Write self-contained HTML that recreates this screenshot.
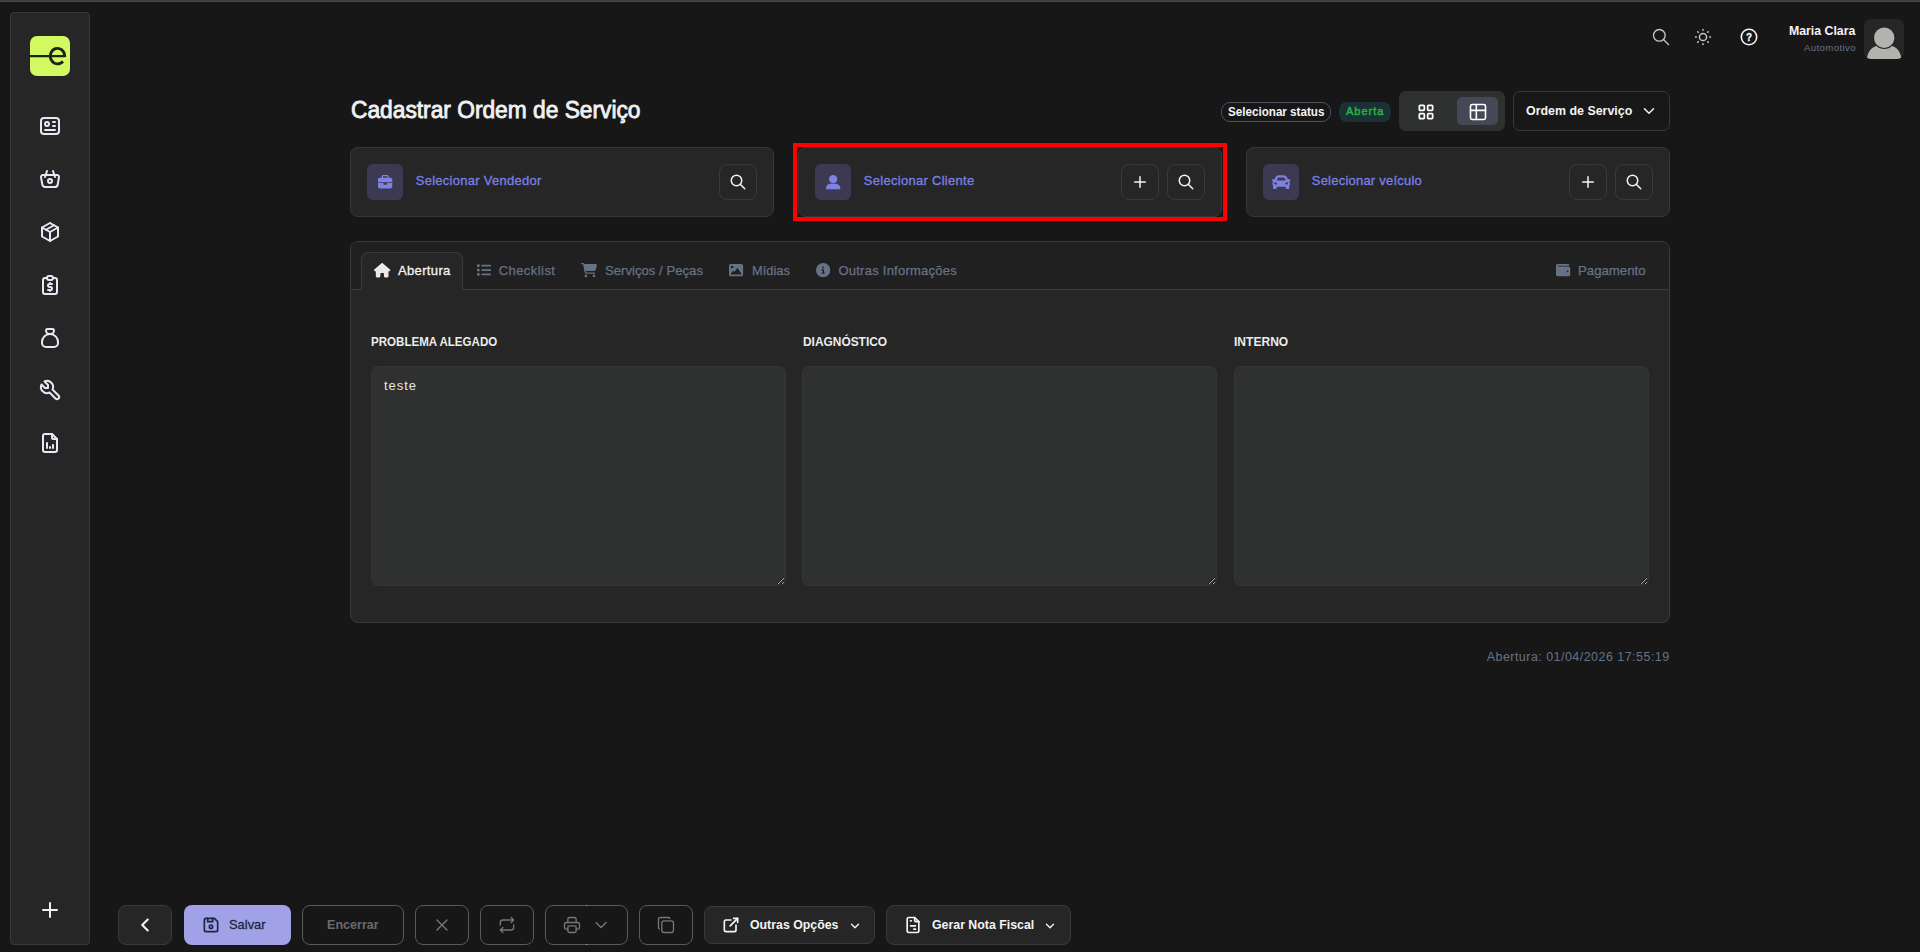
<!DOCTYPE html>
<html lang="pt-BR"><head><meta charset="utf-8"><title>Cadastrar Ordem de Serviço</title>
<style>
*{box-sizing:border-box;margin:0;padding:0}
html,body{width:1920px;height:952px;overflow:hidden;background:#171717;font-family:"Liberation Sans",sans-serif}
.a{position:absolute}
.t{position:absolute;white-space:nowrap;line-height:1;transform-origin:0 50%}
svg{position:absolute;overflow:visible}
.st{fill:none;stroke-linecap:round;stroke-linejoin:round}
.side{left:10px;top:12px;width:80px;height:933px;background:#262626;border:1px solid #383838;border-radius:4px}
.logo{left:30px;top:36px;width:40px;height:40px;border-radius:7px;background:#d2f962}
.card{top:147px;width:424px;height:70px;background:#262626;border:1px solid #373737;border-radius:8px}
.ibox{top:164px;width:36px;height:36px;border-radius:6px;background:#3b3a52}
.sbtn{top:164px;width:38px;height:36px;border-radius:8px;border:1px solid #3a3b3b;background:#262626}
.panel{left:350px;top:241px;width:1320px;height:382px;background:#262626;border:1px solid #3b3b3b;border-radius:8px;overflow:hidden}
.phead{left:0;top:0;width:1318px;height:48px;background:#202020;border-bottom:1px solid #3b3b3b}
.tabact{left:361px;top:252px;width:102px;height:38px;background:#262626;border:1px solid #3b3b3b;border-bottom:none;border-radius:8px 8px 0 0}
textarea{position:absolute;top:366px;width:415px;height:220px;background:#2f3131;border:1px solid #343636;border-radius:7px;resize:both;outline:none;color:transparent;font-family:"Liberation Sans",sans-serif}
.btn{top:905px;height:40px;border-radius:8px}
.ob{border:1px solid #5a5a5a;background:#171717}
.fb{border:1px solid #3a3a3a;background:#262626}

</style></head>
<body>
<div class="a" style="left:0;top:0;width:1920px;height:1px;background:#3b3b3b"></div>
<div class="a" style="left:0;top:1px;width:1920px;height:1px;background:#464847"></div>

<!-- sidebar -->
<div class="a side"></div>
<div class="a logo"></div>
<svg style="left:30px;top:36px" width="40" height="40" viewBox="0 0 40 40"><path fill="none" stroke="#1b2413" stroke-width="2.200" d="M0 20.050H35"/><path fill="none" stroke="#1b2413" stroke-width="2.800" d="M34.700 21.100V20.100A7.200 7.800 0 1 0 32.900 25.300"/></svg>

<svg class="st" style="left:38px;top:114px" width="24" height="24" viewBox="0 0 24 24" stroke="#e6e8f5" stroke-width="2"><path d="M3 7a3 3 0 0 1 3 -3h12a3 3 0 0 1 3 3v10a3 3 0 0 1 -3 3h-12a3 3 0 0 1 -3 -3z"/><path d="M7 10a2 2 0 1 0 4 0a2 2 0 1 0 -4 0"/><path d="M15 8h2"/><path d="M15 12h2"/><path d="M7 16h10"/></svg>
<svg class="st" style="left:38px;top:167px" width="24" height="24" viewBox="0 0 24 24" stroke="#e6e8f5" stroke-width="2"><path d="M10 14a2 2 0 1 0 4 0a2 2 0 0 0 -4 0"/><path d="M5.001 8h13.999a2 2 0 0 1 1.977 2.304l-1.255 7.152a3 3 0 0 1 -2.966 2.544h-9.512a3 3 0 0 1 -2.965 -2.544l-1.255 -7.152a2 2 0 0 1 1.977 -2.304z"/><path d="M17 10l-2 -6"/><path d="M7 10l2 -6"/></svg>
<svg class="st" style="left:38px;top:220px" width="24" height="24" viewBox="0 0 24 24" stroke="#e6e8f5" stroke-width="2"><path d="M12 3l8 4.500l0 9l-8 4.500l-8 -4.500l0 -9l8 -4.500"/><path d="M12 12l8 -4.500"/><path d="M12 12l0 9"/><path d="M12 12l-8 -4.500"/><path d="M16 5.250l-8 4.500"/></svg>
<svg class="st" style="left:38px;top:273px" width="24" height="24" viewBox="0 0 24 24" stroke="#e6e8f5" stroke-width="2"><path d="M9 5h-2a2 2 0 0 0 -2 2v12a2 2 0 0 0 2 2h10a2 2 0 0 0 2 -2v-12a2 2 0 0 0 -2 -2h-2"/><path d="M9 5a2 2 0 0 1 2 -2h2a2 2 0 0 1 2 2v0a2 2 0 0 1 -2 2h-2a2 2 0 0 1 -2 -2z"/><path d="M14 11h-2.500a1.500 1.500 0 0 0 0 3h1a1.500 1.500 0 0 1 0 3h-2.500"/><path d="M12 17v1m0 -8v1"/></svg>
<svg class="st" style="left:38px;top:326px" width="24" height="24" viewBox="0 0 24 24" stroke="#e6e8f5" stroke-width="2"><path d="M9.500 3h5a1.500 1.500 0 0 1 1.500 1.500a3.500 3.500 0 0 1 -3.500 3.500h-1a3.500 3.500 0 0 1 -3.500 -3.500a1.500 1.500 0 0 1 1.500 -1.500z"/><path d="M4 17v-1a8 8 0 1 1 16 0v1a4 4 0 0 1 -4 4h-8a4 4 0 0 1 -4 -4z"/></svg>
<svg class="st" style="left:38px;top:378px" width="24" height="24" viewBox="0 0 24 24" stroke="#e6e8f5" stroke-width="2"><path d="M7 10h3v-3l-3.500 -3.500a6 6 0 0 1 8 8l6 6a2 2 0 0 1 -3 3l-6 -6a6 6 0 0 1 -8 -8l3.500 3.500"/></svg>
<svg class="st" style="left:38px;top:431px" width="24" height="24" viewBox="0 0 24 24" stroke="#e6e8f5" stroke-width="2"><path d="M14 3v4a1 1 0 0 0 1 1h4"/><path d="M17 21h-10a2 2 0 0 1 -2 -2v-14a2 2 0 0 1 2 -2h7l5 5v11a2 2 0 0 1 -2 2z"/><path d="M9 17v-5"/><path d="M12 17v-1"/><path d="M15 17v-3"/></svg>
<svg class="st" style="left:38px;top:898px" width="24" height="24" viewBox="0 0 24 24" stroke="#eceef8" stroke-width="2"><path d="M12 5v14"/><path d="M5 12h14"/></svg>

<!-- header right -->
<svg class="st" style="left:1651px;top:27px" width="20" height="20" viewBox="0 0 24 24" stroke="#c6c6c6" stroke-width="1.600"><path d="M3 10a7 7 0 1 0 14 0a7 7 0 1 0 -14 0"/><path d="M21 21l-6 -6"/></svg>
<svg class="st" style="left:1692px;top:26px" width="22" height="22" viewBox="0 0 24 24" stroke="#c6c6c6" stroke-width="1.600"><circle cx="12" cy="12" r="3.9"/><path d="M3.800 12h.9"/><path d="M19.300 12h.9"/><path d="M12 3.800v.9"/><path d="M12 19.300v.9"/><path d="M6.200 6.200l.7 .7"/><path d="M17.800 6.200l-.7 .7"/><path d="M17.800 17.800l-.7 -.7"/><path d="M6.200 17.800l.7 -.7"/></svg>
<svg style="left:1740px;top:28px" width="18" height="18" viewBox="0 0 18 18"><circle cx="9" cy="9" r="7.700" fill="none" stroke="#f4f4f4" stroke-width="1.600"/><text transform="translate(9 13.050) scale(.86 1)" x="0" y="0" text-anchor="middle" font-family="Liberation Sans, sans-serif" font-weight="bold" font-size="11.500" fill="#f4f4f4" stroke="#f4f4f4" stroke-width=".35">?</text></svg>
<div class="a" style="left:1864px;top:19px;width:40px;height:40px;border-radius:7px;background:#262626;overflow:hidden">
<svg style="left:0;top:0" width="40" height="40" viewBox="0 0 40 40"><path fill="#b4b2af" d="M3 40C3.500 32 9 27 14.500 26.600C16 28.300 18 29.300 20.200 29.300C22.400 29.300 24.400 28.300 25.900 26.600C31.400 27 36.900 32 37.400 40Z"/><circle cx="20.200" cy="18.800" r="11.300" fill="#262626"/><circle cx="20.200" cy="18.800" r="10.200" fill="#b4b2af"/></svg></div>

<!-- title row -->
<div class="a" style="left:1221px;top:102px;width:110px;height:20px;border:1px solid #4b505c;border-radius:9px"></div>
<div class="a" style="left:1339px;top:102px;width:52px;height:20px;border-radius:8px;background:#1b3136"></div>
<div class="a" style="left:1399px;top:91px;width:106px;height:40px;border-radius:7px;background:#2f3030"></div>
<div class="a" style="left:1457px;top:97px;width:41px;height:28px;border-radius:5px;background:#474857"></div>
<svg class="st" style="left:1416px;top:102px" width="20" height="20" viewBox="0 0 24 24" stroke="#ffffff" stroke-width="2.100"><rect x="4" y="4" width="6" height="6" rx="1"/><rect x="14" y="4" width="6" height="6" rx="1"/><rect x="4" y="14" width="6" height="6" rx="1"/><rect x="14" y="14" width="6" height="6" rx="1"/></svg>
<svg class="st" style="left:1468px;top:102px" width="20" height="20" viewBox="0 0 24 24" stroke="#ffffff" stroke-width="1.900"><path d="M3 5a2 2 0 0 1 2 -2h14a2 2 0 0 1 2 2v14a2 2 0 0 1 -2 2h-14a2 2 0 0 1 -2 -2v-14z"/><path d="M3 10h18"/><path d="M10 3v18"/></svg>
<div class="a" style="left:1513px;top:91px;width:157px;height:40px;border:1px solid #383838;border-radius:7px;background:#181818"></div>
<svg class="st" style="left:1640px;top:102px" width="18" height="18" viewBox="0 0 24 24" stroke="#f4f4f4" stroke-width="2"><path d="M6 9l6 6l6 -6"/></svg>

<!-- cards -->
<div class="a card" style="left:350px"></div>
<div class="a card" style="left:798px"></div>
<div class="a card" style="left:1246px"></div>
<div class="a" style="left:793px;top:143px;width:434px;height:78px;border:4px solid #ff0000"></div>
<div class="a ibox" style="left:367px"></div>
<div class="a ibox" style="left:815px"></div>
<div class="a ibox" style="left:1263px"></div>
<svg style="left:377.800px;top:174.800px" width="14.300" height="14.300" viewBox="0 0 512 512"><path fill="#7f82e2" d="M184 48H328c4.400 0 8 3.600 8 8V96H176V56c0-4.400 3.600-8 8-8zm-56 8V96H64C28.700 96 0 124.700 0 160v96H192 320 512V160c0-35.300-28.700-64-64-64H384V56c0-30.900-25.100-56-56-56H184c-30.900 0-56 25.100-56 56zM512 288H320v32c0 17.700-14.300 32-32 32H224c-17.700 0-32-14.300-32-32V288H0V416c0 35.300 28.700 64 64 64H448c35.300 0 64-28.700 64-64V288z"/></svg>
<svg style="left:825.800px;top:174.800px" width="14.300" height="14.300" viewBox="0 0 14.300 14.300"><circle cx="7.150" cy="4.150" r="4.150" fill="#7f82e2"/><path fill="#7f82e2" d="M0 13.900V13.400C0 10.700 2.100 8.800 4.900 8.800H9.400C12.200 8.800 14.300 10.700 14.300 13.400V13.900Q14.300 14.300 13.900 14.300H.4Q0 14.300 0 13.900Z"/></svg>
<svg style="left:1271.800px;top:172.800px" width="18.400" height="18.400" viewBox="0 0 512 512"><path fill="#7f82e2" d="M499.990 176h-59.870l-16.640-41.600C406.380 91.630 365.570 64 319.500 64h-127c-46.060 0-86.880 27.630-103.990 70.400L71.870 176H12.010C4.200 176-1.530 183.340.37 190.910l6 24C7.700 220.250 12.500 224 18.010 224h20.070C24.650 235.730 16 252.780 16 272v48c0 16.120 6.160 30.670 16 41.930V416c0 17.670 14.330 32 32 32h32c17.670 0 32-14.330 32-32v-32h256v32c0 17.670 14.330 32 32 32h32c17.670 0 32-14.330 32-32v-54.070c9.840-11.250 16-25.800 16-41.930v-48c0-19.220-8.650-36.270-22.070-48H494c5.510 0 10.310-3.750 11.640-9.090l6-24c1.890-7.570-3.840-14.910-11.650-14.910zm-352.060-17.830c7.290-18.220 24.940-30.170 44.570-30.170h127c19.630 0 37.280 11.950 44.570 30.170L384 208H128l19.930-49.830zM96 319.800c-19.200 0-32-12.760-32-31.900S76.800 256 96 256s48 28.710 48 47.850-28.800 15.950-48 15.950zm320 0c-19.200 0-48 3.190-48-15.950S396.800 256 416 256s32 12.760 32 31.900-12.800 31.900-32 31.900z"/></svg>

<div class="a sbtn" style="left:719px"></div>
<div class="a sbtn" style="left:1121px"></div>
<div class="a sbtn" style="left:1167px"></div>
<div class="a sbtn" style="left:1569px"></div>
<div class="a sbtn" style="left:1615px"></div>
<svg class="st" style="left:729px;top:173px" width="18" height="18" viewBox="0 0 24 24" stroke="#f4f4f4" stroke-width="2"><path d="M3 10a7 7 0 1 0 14 0a7 7 0 1 0 -14 0"/><path d="M21 21l-6 -6"/></svg>
<svg class="st" style="left:1177px;top:173px" width="18" height="18" viewBox="0 0 24 24" stroke="#f4f4f4" stroke-width="2"><path d="M3 10a7 7 0 1 0 14 0a7 7 0 1 0 -14 0"/><path d="M21 21l-6 -6"/></svg>
<svg class="st" style="left:1625px;top:173px" width="18" height="18" viewBox="0 0 24 24" stroke="#f4f4f4" stroke-width="2"><path d="M3 10a7 7 0 1 0 14 0a7 7 0 1 0 -14 0"/><path d="M21 21l-6 -6"/></svg>
<svg class="st" style="left:1131px;top:173px" width="18" height="18" viewBox="0 0 24 24" stroke="#f4f4f4" stroke-width="2"><path d="M12 5v14"/><path d="M5 12h14"/></svg>
<svg class="st" style="left:1579px;top:173px" width="18" height="18" viewBox="0 0 24 24" stroke="#f4f4f4" stroke-width="2"><path d="M12 5v14"/><path d="M5 12h14"/></svg>

<!-- panel -->
<div class="a panel"><div class="a phead"></div></div>
<div class="a tabact"></div>
<svg style="left:373.900px;top:262.800px" width="16.300" height="14.490" viewBox="0 0 576 512"><path fill="#e9e9e9" d="M575.800 255.500c0 18-15 32.100-32 32.100h-32l.7 160.200c0 2.700-.2 5.400-.5 8.100V472c0 22.100-17.900 40-40 40H456c-1.100 0-2.200 0-3.300-.1c-1.400 .1-2.800 .1-4.200 .1H416 392c-22.100 0-40-17.900-40-40V448 384c0-17.700-14.300-32-32-32H256c-17.700 0-32 14.300-32 32v64 24c0 22.100-17.900 40-40 40H160 128.100c-1.500 0-3-.1-4.500-.2c-1.200 .1-2.400 .2-3.600 .2H104c-22.100 0-40-17.900-40-40V360c0-.9 0-1.900 .1-2.800V287.600H32c-18 0-32-14-32-32.100c0-9 3-17 10-24L266.400 8c7-7 15-8 22-8s15 2 21 7L564.800 231.500c8 7 12 15 11 24z"/></svg>
<svg style="left:476.600px;top:263.200px" width="14" height="14" viewBox="0 0 512 512"><path fill="#667386" d="M80 368H16a16 16 0 0 0-16 16v64a16 16 0 0 0 16 16h64a16 16 0 0 0 16-16v-64a16 16 0 0 0-16-16zm0-320H16A16 16 0 0 0 0 64v64a16 16 0 0 0 16 16h64a16 16 0 0 0 16-16V64a16 16 0 0 0-16-16zm0 160H16a16 16 0 0 0-16 16v64a16 16 0 0 0 16 16h64a16 16 0 0 0 16-16v-64a16 16 0 0 0-16-16zm416 176H176a16 16 0 0 0-16 16v32a16 16 0 0 0 16 16h320a16 16 0 0 0 16-16v-32a16 16 0 0 0-16-16zm0-320H176a16 16 0 0 0-16 16v32a16 16 0 0 0 16 16h320a16 16 0 0 0 16-16V80a16 16 0 0 0-16-16zm0 160H176a16 16 0 0 0-16 16v32a16 16 0 0 0 16 16h320a16 16 0 0 0 16-16v-32a16 16 0 0 0-16-16z"/></svg>
<svg style="left:580.800px;top:262.750px" width="16.100" height="14.310" viewBox="0 0 576 512"><path fill="#667386" d="M0 24C0 10.700 10.700 0 24 0H69.500c22 0 41.500 12.800 50.600 32h411c26.300 0 45.500 25 38.600 50.400l-41 152.300c-8.500 31.400-37 53.300-69.500 53.300H170.700l5.400 28.500c2.200 11.300 12.100 19.500 23.600 19.500H488c13.300 0 24 10.700 24 24s-10.700 24-24 24H199.700c-34.600 0-64.300-24.600-70.700-58.500L77.400 54.500c-.7-3.800-4-6.500-7.900-6.500H24C10.700 48 0 37.300 0 24zM128 464a48 48 0 1 1 96 0 48 48 0 1 1 -96 0zm336-48a48 48 0 1 1 0 96 48 48 0 1 1 0-96z"/></svg>
<svg style="left:729px;top:262.900px" width="14.100" height="14.100" viewBox="0 0 512 512"><path fill="#667386" d="M0 96C0 60.700 28.700 32 64 32H448c35.300 0 64 28.700 64 64V416c0 35.300-28.700 64-64 64H64c-35.300 0-64-28.700-64-64V96zM323.800 202.500c-4.500-6.600-11.900-10.500-19.800-10.500s-15.400 3.900-19.800 10.500l-87 127.600L170.700 297c-4.600-5.700-11.500-9-18.700-9s-14.200 3.300-18.700 9l-64 80c-5.800 7.200-6.900 17.100-2.900 25.400s12.400 13.600 21.600 13.600h96 32H424c8.900 0 17.100-4.900 21.200-12.800s3.600-17.400-1.400-24.700l-120-176zM112 192a48 48 0 1 0 0-96 48 48 0 1 0 0 96z"/></svg>
<svg style="left:815.900px;top:263px" width="14.300" height="14.300" viewBox="0 0 512 512"><path fill="#667386" d="M256 512A256 256 0 1 0 256 0a256 256 0 1 0 0 512zM216 336h24V272H216c-13.300 0-24-10.700-24-24s10.700-24 24-24h48c13.300 0 24 10.700 24 24v88h8c13.300 0 24 10.700 24 24s-10.700 24-24 24H216c-13.300 0-24-10.700-24-24s10.700-24 24-24zm40-208a32 32 0 1 1 0 64 32 32 0 1 1 0-64z"/></svg>
<svg style="left:1555.800px;top:263.100px" width="14.200" height="14.200" viewBox="0 0 512 512"><path fill="#667386" d="M64 32C28.700 32 0 60.700 0 96V416c0 35.300 28.700 64 64 64H448c35.300 0 64-28.700 64-64V192c0-35.300-28.700-64-64-64H80c-8.800 0-16-7.200-16-16s7.200-16 16-16H448c17.700 0 32-14.300 32-32s-14.300-32-32-32H64zM416 272a32 32 0 1 1 0 64 32 32 0 1 1 0-64z"/></svg>

<textarea style="left:371px;color:#e6e6e6;font-size:13px;letter-spacing:.9px;padding:11px 12.100px;line-height:15px" readonly>teste</textarea>
<textarea style="left:802px" readonly></textarea>
<textarea style="left:1234px" readonly></textarea>

<!-- bottom bar -->
<div class="a btn fb" style="left:118px;width:54px"></div>
<svg class="st" style="left:133.500px;top:913.700px" width="22" height="22" viewBox="0 0 24 24" stroke="#f4f4f4" stroke-width="2.300" stroke-linejoin="miter"><path d="M15 6l-6 6l6 6"/></svg>
<div class="a btn" style="left:184px;width:107px;background:#a0a1e6"></div>
<svg class="st" style="left:201px;top:915px" width="20" height="20" viewBox="0 0 24 24" stroke="#1c2740" stroke-width="2"><path d="M6 4h10l4 4v10a2 2 0 0 1 -2 2h-12a2 2 0 0 1 -2 -2v-12a2 2 0 0 1 2 -2"/><path d="M10 14a2 2 0 1 0 4 0a2 2 0 1 0 -4 0"/><path d="M14 4v4h-6v-4"/></svg>
<div class="a btn ob" style="left:302px;width:102px"></div>
<div class="a btn ob" style="left:415px;width:54px"></div>
<svg class="st" style="left:432px;top:915px" width="20" height="20" viewBox="0 0 24 24" stroke="#777777" stroke-width="1.600"><path d="M18 6l-12 12"/><path d="M6 6l12 12"/></svg>
<div class="a btn ob" style="left:480px;width:54px"></div>
<svg class="st" style="left:497px;top:915px" width="20" height="20" viewBox="0 0 24 24" stroke="#777777" stroke-width="1.600"><path d="M4 12v-3a3 3 0 0 1 3 -3h13m-3 -3l3 3l-3 3"/><path d="M20 12v3a3 3 0 0 1 -3 3h-13m3 3l-3 -3l3 -3"/></svg>
<div class="a btn ob" style="left:545px;width:83px"></div>
<svg class="st" style="left:562px;top:915px" width="20" height="20" viewBox="0 0 24 24" stroke="#777777" stroke-width="1.600"><path d="M17 17h2a2 2 0 0 0 2 -2v-4a2 2 0 0 0 -2 -2h-14a2 2 0 0 0 -2 2v4a2 2 0 0 0 2 2h2"/><path d="M17 9v-4a2 2 0 0 0 -2 -2h-6a2 2 0 0 0 -2 2v4"/><path d="M7 15a2 2 0 0 1 2 -2h6a2 2 0 0 1 2 2v4a2 2 0 0 1 -2 2h-6a2 2 0 0 1 -2 -2z"/></svg>
<svg class="st" style="left:591px;top:915px" width="20" height="20" viewBox="0 0 24 24" stroke="#777777" stroke-width="1.600"><path d="M6 9l6 6l6 -6"/></svg>
<div class="a" style="left:586px;top:905px;width:1px;height:1px;background:#a8a8a8"></div><div class="a" style="left:586px;top:944px;width:1px;height:1px;background:#a8a8a8"></div>
<div class="a btn ob" style="left:639px;width:54px"></div>
<svg class="st" style="left:656px;top:915px" width="20" height="20" viewBox="0 0 24 24" stroke="#777777" stroke-width="1.600"><path d="M7 9.667a2.667 2.667 0 0 1 2.667 -2.667h8.666a2.667 2.667 0 0 1 2.667 2.667v8.666a2.667 2.667 0 0 1 -2.667 2.667h-8.666a2.667 2.667 0 0 1 -2.667 -2.667z"/><path d="M4.012 16.737a2.005 2.005 0 0 1 -1.012 -1.737v-10c0 -1.100 .9 -2 2 -2h10c.75 0 1.158 .385 1.500 1"/></svg>
<div class="a btn fb" style="left:704px;top:906px;width:171px;height:38px"></div>
<svg class="st" style="left:721px;top:915px" width="20" height="20" viewBox="0 0 24 24" stroke="#f4f4f4" stroke-width="2"><path d="M12 6h-6a2 2 0 0 0 -2 2v10a2 2 0 0 0 2 2h10a2 2 0 0 0 2 -2v-6"/><path d="M11 13l9 -9"/><path d="M15 4h5v5"/></svg>
<svg class="st" style="left:847.500px;top:919px" width="14" height="14" viewBox="0 0 24 24" stroke="#f4f4f4" stroke-width="2.400"><path d="M6 9l6 6l6 -6"/></svg>
<div class="a btn fb" style="left:886px;width:185px"></div>
<svg class="st" style="left:903px;top:915px" width="20" height="20" viewBox="0 0 24 24" stroke="#f4f4f4" stroke-width="2"><path d="M14 3v4a1 1 0 0 0 1 1h4"/><path d="M17 21h-10a2 2 0 0 1 -2 -2v-14a2 2 0 0 1 2 -2h7l5 5v11a2 2 0 0 1 -2 2z"/><path d="M9 7h1"/><path d="M9 13h6"/><path d="M13 17h2"/></svg>
<svg class="st" style="left:1042.500px;top:919px" width="14" height="14" viewBox="0 0 24 24" stroke="#f4f4f4" stroke-width="2.400"><path d="M6 9l6 6l6 -6"/></svg>

<span class="t" id="title" style="left:350.50px;top:98.86px;font-size:23.5px;font-weight:normal;color:#f1f1f1;-webkit-text-stroke:0.85px #f1f1f1;transform:scaleX(0.9679)">Cadastrar Ordem de Serviço</span>
<span class="t" id="selstatus" style="left:1228.00px;top:105.59px;font-size:12px;font-weight:bold;color:#f4f4f4;transform:scaleX(0.9701)">Selecionar status</span>
<span class="t" id="aberta" style="left:1346.00px;top:106.29px;font-size:11px;font-weight:normal;color:#27b641;-webkit-text-stroke:0.45px #27b641;letter-spacing:0.996px;transform:scaleX(1.0000)">Aberta</span>
<span class="t" id="ddos" style="left:1526.40px;top:103.60px;font-size:13px;font-weight:bold;color:#f4f4f4;transform:scaleX(0.9552)">Ordem de Serviço</span>
<span class="t" id="selvend" style="left:415.75px;top:174.25px;font-size:13px;font-weight:normal;color:#7b7fe6;-webkit-text-stroke:0.3px #7b7fe6;letter-spacing:0.266px;transform:scaleX(1.0000)">Selecionar Vendedor</span>
<span class="t" id="selcli" style="left:863.75px;top:174.25px;font-size:13px;font-weight:normal;color:#7b7fe6;-webkit-text-stroke:0.3px #7b7fe6;letter-spacing:0.293px;transform:scaleX(1.0000)">Selecionar Cliente</span>
<span class="t" id="selvei" style="left:1311.75px;top:174.25px;font-size:13px;font-weight:normal;color:#7b7fe6;-webkit-text-stroke:0.3px #7b7fe6;letter-spacing:0.222px;transform:scaleX(1.0000)">Selecionar veículo</span>
<span class="t" id="tab1" style="left:398.00px;top:264.20px;font-size:13px;font-weight:normal;color:#f4f4f4;-webkit-text-stroke:0.3px #f4f4f4;letter-spacing:0.346px;transform:scaleX(1.0000)">Abertura</span>
<span class="t" id="tab2" style="left:498.70px;top:264.20px;font-size:13px;font-weight:normal;color:#667386;-webkit-text-stroke:0.25px #667386;letter-spacing:0.444px;transform:scaleX(1.0000)">Checklist</span>
<span class="t" id="tab3" style="left:605.40px;top:264.20px;font-size:13px;font-weight:normal;color:#667386;-webkit-text-stroke:0.25px #667386;transform:scaleX(1.0121)">Serviços / Peças</span>
<span class="t" id="tab4" style="left:751.60px;top:264.20px;font-size:13px;font-weight:normal;color:#667386;-webkit-text-stroke:0.25px #667386;transform:scaleX(0.9870)">Mídias</span>
<span class="t" id="tab5" style="left:838.40px;top:264.20px;font-size:13px;font-weight:normal;color:#667386;-webkit-text-stroke:0.25px #667386;letter-spacing:0.250px;transform:scaleX(1.0000)">Outras Informações</span>
<span class="t" id="tab6" style="left:1578.30px;top:264.20px;font-size:13px;font-weight:normal;color:#667386;-webkit-text-stroke:0.25px #667386;transform:scaleX(1.0150)">Pagamento</span>
<span class="t" id="lab1" style="left:371.25px;top:335.25px;font-size:13px;font-weight:bold;color:#ececec;transform:scaleX(0.8888)">PROBLEMA ALEGADO</span>
<span class="t" id="lab2" style="left:802.80px;top:335.25px;font-size:13px;font-weight:bold;color:#ececec;transform:scaleX(0.9168)">DIAGNÓSTICO</span>
<span class="t" id="lab3" style="left:1234.30px;top:335.25px;font-size:13px;font-weight:bold;color:#ececec;transform:scaleX(0.9265)">INTERNO</span>
<span class="t" id="foot" style="left:1486.70px;top:651.12px;font-size:12.5px;font-weight:normal;color:#667386;letter-spacing:0.461px;transform:scaleX(1.0000)">Abertura: 01/04/2026 17:55:19</span>
<span class="t" id="uname" style="left:1789.30px;top:23.70px;font-size:13px;font-weight:bold;color:#f4f4f4;transform:scaleX(0.9459)">Maria Clara</span>
<span class="t" id="urole" style="left:1804.00px;top:42.97px;font-size:9.6px;font-weight:normal;color:#667386;letter-spacing:0.400px;transform:scaleX(1.0000)">Automotivo</span>
<span class="t" id="salvar" style="left:228.70px;top:917.97px;font-size:13.5px;font-weight:normal;color:#1c2740;-webkit-text-stroke:0.3px #1c2740;transform:scaleX(0.9565)">Salvar</span>
<span class="t" id="encerrar" style="left:327.10px;top:918.40px;font-size:13px;font-weight:bold;color:#6a6a6a;transform:scaleX(0.9666)">Encerrar</span>
<span class="t" id="outras" style="left:749.80px;top:918.40px;font-size:13px;font-weight:bold;color:#f4f4f4;transform:scaleX(0.9485)">Outras Opções</span>
<span class="t" id="gerar" style="left:931.60px;top:918.40px;font-size:13px;font-weight:bold;color:#f4f4f4;transform:scaleX(0.9493)">Gerar Nota Fiscal</span>
</body></html>
